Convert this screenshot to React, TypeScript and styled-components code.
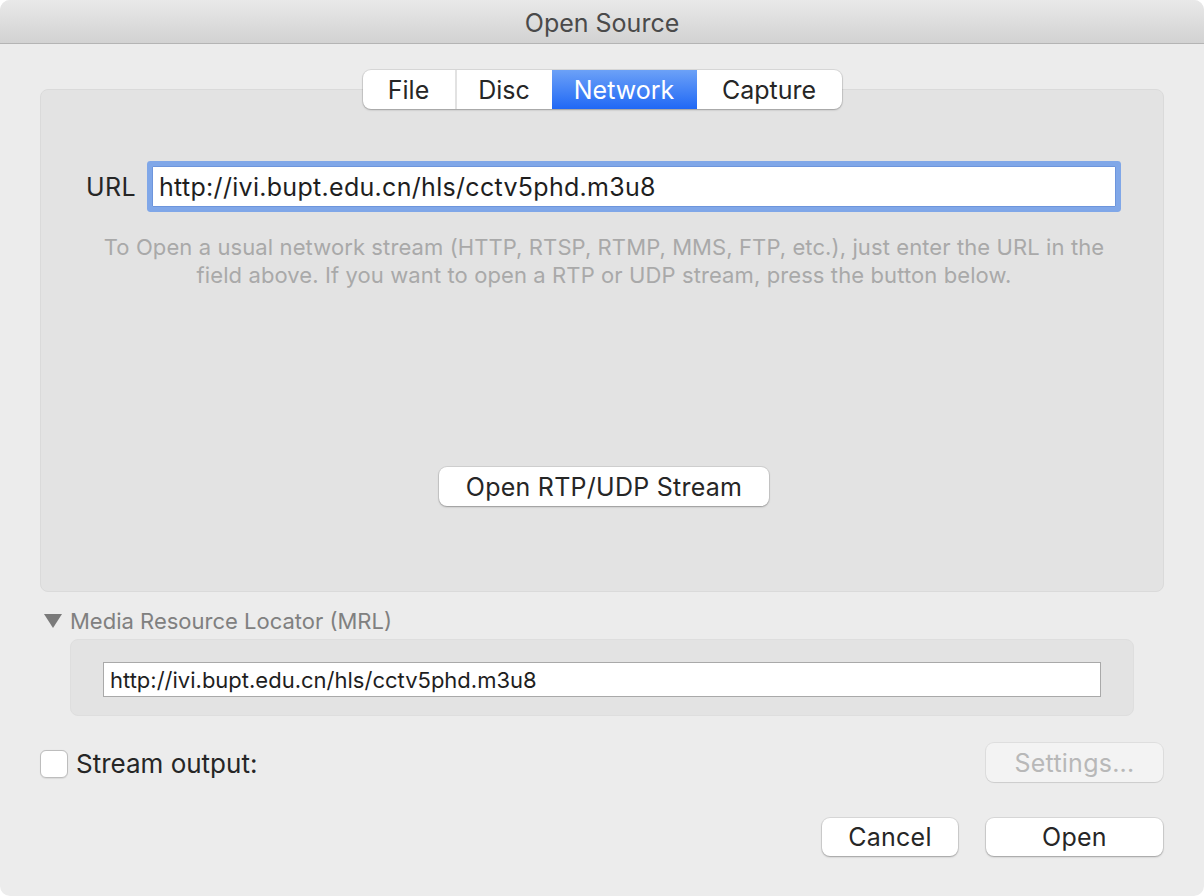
import React from "react";
import styled, { createGlobalStyle } from "styled-components";

const Global = createGlobalStyle`
  html, body { margin: 0; padding: 0; background: #ffffff; }
  body { font-family: Inter, "Liberation Sans", Arial, sans-serif; -webkit-font-smoothing: antialiased; }
  * { box-sizing: border-box; }
`;

const Window = styled.div`
  width: 1204px;
  height: 896px;
  border-radius: 10px;
  overflow: hidden;
  background: #ececec;
  display: flex;
  flex-direction: column;
  color: #262626;
`;

const TitleBar = styled.div`
  height: 44px;
  flex: none;
  background: linear-gradient(#e9e9e9, #d2d2d2);
  border-bottom: 1px solid #b4b4b4;
  display: flex;
  align-items: center;
  justify-content: center;
  font-size: 25px;
  color: #4a4a4a;
  padding-top: 2px;
`;

const Content = styled.div`
  padding: 0 40px;
  display: flex;
  flex-direction: column;
`;

const TabsRow = styled.div`
  display: flex;
  justify-content: center;
  margin-top: 26px;
  position: relative;
  z-index: 1;
`;

const Segmented = styled.div`
  display: flex;
  height: 39px;
  border-radius: 8px;
  background: #ffffff;
  box-shadow: 0 0 0 1px rgba(0, 0, 0, 0.08), 0 1px 2px rgba(0, 0, 0, 0.25);
  overflow: hidden;
`;

const Segment = styled.div<{ $w: number; $active?: boolean; $sep?: boolean }>`
  width: ${(p) => p.$w}px;
  display: flex;
  align-items: center;
  justify-content: center;
  font-size: 25px;
  color: ${(p) => (p.$active ? "#ffffff" : "#262626")};
  background: ${(p) => (p.$active ? "linear-gradient(#6ca1f7, #2068f5)" : "transparent")};
  border-left: ${(p) => (p.$sep ? "2px solid #e2e2e2" : "none")};
`;

const GroupBox = styled.div`
  margin-top: -20px;
  height: 503px;
  background: #e3e3e3;
  border: 1px solid #dadada;
  border-radius: 8px;
  display: flex;
  flex-direction: column;
  align-items: center;
  padding: 70px 41px 0 45px;
`;

const UrlRow = styled.div`
  display: flex;
  align-items: center;
  align-self: stretch;
  gap: 16px;
`;

const UrlLabel = styled.div`
  font-size: 25px;
  letter-spacing: 0.4px;
  color: #262626;
`;

const UrlField = styled.div`
  flex: 1;
  height: 41px;
  margin-right: 6px;
  background: #ffffff;
  border: 1px solid #6d95dc;
  border-radius: 1px;
  box-shadow: 0 0 0 5px #80a7e8;
  display: flex;
  align-items: center;
  padding-left: 6px;
  font-size: 25px;
  letter-spacing: 0.3px;
  color: #1e1e1e;
  margin-top: 6px;
  margin-bottom: 6px;
`;

const HelpText = styled.div`
  margin-top: 20px;
  font-size: 22px;
  line-height: 28px;
  letter-spacing: 0.1px;
  color: #a9a9a9;
  text-align: center;
`;

const PushButton = styled.div<{ $w: number; $h?: number; $disabled?: boolean }>`
  width: ${(p) => p.$w}px;
  height: ${(p) => p.$h ?? 39}px;
  border-radius: 8px;
  background: ${(p) => (p.$disabled ? "#f3f3f3" : "#ffffff")};
  box-shadow: ${(p) =>
    p.$disabled
      ? "0 0 0 1px rgba(0,0,0,0.06), 0 1px 1px rgba(0,0,0,0.08)"
      : "0 0 0 1px rgba(0,0,0,0.08), 0 1px 2px rgba(0,0,0,0.28)"};
  display: flex;
  align-items: center;
  justify-content: center;
  font-size: 25px;
  letter-spacing: 0.25px;
  color: ${(p) => (p.$disabled ? "#b8b8b8" : "#262626")};
  flex: none;
`;

const RtpButtonWrap = styled.div`
  margin-top: 178px;
`;

const Disclosure = styled.div`
  margin-top: 15px;
  display: flex;
  align-items: center;
  height: 28px;
  font-size: 22px;
  color: #808080;
  gap: 8px;
  padding-left: 4px;
`;

const MrlBox = styled.div`
  margin: 4px 30px 0 30px;
  height: 77px;
  background: #e3e3e3;
  border: 1px solid #dedede;
  border-radius: 8px;
  padding: 22px 32px 0 32px;
`;

const MrlField = styled.div`
  height: 35px;
  background: #ffffff;
  border: 1px solid #a9a9a9;
  display: flex;
  align-items: center;
  padding-left: 6px;
  font-size: 22px;
  color: #1e1e1e;
`;

const StreamRow = styled.div`
  margin-top: 27px;
  display: flex;
  align-items: center;
  justify-content: space-between;
  padding-right: 1px;
`;

const CheckLabel = styled.label`
  display: flex;
  align-items: center;
  gap: 8px;
  font-size: 26px;
  color: #262626;
  padding-top: 2px;
`;

const CheckBox = styled.span`
  width: 28px;
  height: 28px;
  border-radius: 6px;
  background: #ffffff;
  border: 1px solid #bdbdbd;
  box-shadow: 0 0.5px 1px rgba(0, 0, 0, 0.08);
`;

const ButtonRow = styled.div`
  margin-top: 36px;
  display: flex;
  justify-content: flex-end;
  gap: 28px;
  padding-right: 1px;
`;

export default function App() {
  return (
    <>
      <Global />
      <Window>
        <TitleBar>Open Source</TitleBar>
        <Content>
          <TabsRow>
            <Segmented>
              <Segment $w={92}>File</Segment>
              <Segment $w={97} $sep>Disc</Segment>
              <Segment $w={145} $active>Network</Segment>
              <Segment $w={145}>Capture</Segment>
            </Segmented>
          </TabsRow>
          <GroupBox>
            <UrlRow>
              <UrlLabel>URL</UrlLabel>
              <UrlField>http://ivi.bupt.edu.cn/hls/cctv5phd.m3u8</UrlField>
            </UrlRow>
            <HelpText>
              To Open a usual network stream (HTTP, RTSP, RTMP, MMS, FTP, etc.), just enter the URL in the
              <br />
              field above. If you want to open a RTP or UDP stream, press the button below.
            </HelpText>
            <RtpButtonWrap>
              <PushButton $w={330}>Open RTP/UDP Stream</PushButton>
            </RtpButtonWrap>
          </GroupBox>
          <Disclosure>
            <svg width="18" height="14" viewBox="0 0 18 14">
              <path d="M0 0 H18 L9 14 Z" fill="#7a7a7a" />
            </svg>
            Media Resource Locator (MRL)
          </Disclosure>
          <MrlBox>
            <MrlField>http://ivi.bupt.edu.cn/hls/cctv5phd.m3u8</MrlField>
          </MrlBox>
          <StreamRow>
            <CheckLabel>
              <CheckBox />
              Stream output:
            </CheckLabel>
            <PushButton $w={177} $disabled>Settings...</PushButton>
          </StreamRow>
          <ButtonRow>
            <PushButton $w={136} $h={38}>Cancel</PushButton>
            <PushButton $w={177} $h={38}>Open</PushButton>
          </ButtonRow>
        </Content>
      </Window>
    </>
  );
}
